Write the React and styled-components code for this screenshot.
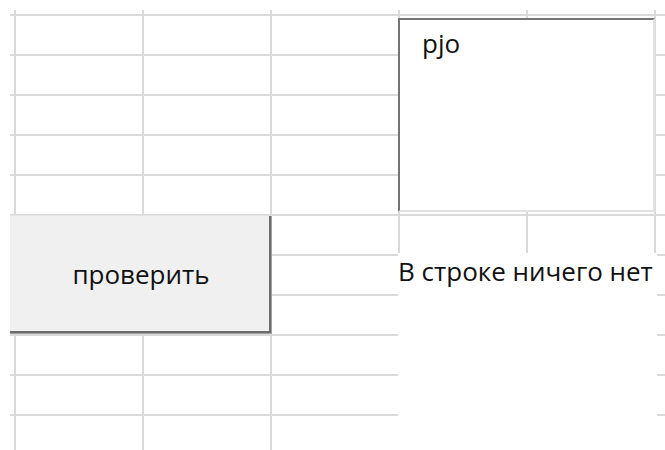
import React from "react";
import styled, { createGlobalStyle } from "styled-components";

const GlobalStyle = createGlobalStyle`
  html, body {
    margin: 0;
    padding: 0;
    background: #ffffff;
  }

  body {
    font-family: "Open Sans", "Noto Sans", "Liberation Sans", sans-serif;
    color: #111111;
    overflow: hidden;
  }
`;

const COLS = 6;
const ROWS = 11;

const Sheet = styled.div`
  position: relative;
  margin: 10px 0 0 10px;
  display: grid;
  grid-template-columns: 6px repeat(5, 128px) 1fr;
  grid-template-rows: 6px repeat(${ROWS}, 40px);
  height: 440px;
`;

const Cell = styled.div`
  box-sizing: border-box;
  border-bottom: 2px solid #dadada;
  border-right: ${({ $last }) => ($last ? "none" : "2px solid #dadada")};
`;

// floating controls sit on top of the grid
const TextBox = styled.div`
  position: absolute;
  left: 388px;
  top: 8px;
  width: 257px;
  height: 194px;
  box-sizing: border-box;
  background: #ffffff;
  border-top: 2px solid #747474;
  border-left: 2px solid #747474;
  border-right: 2px solid #e2e2e2;
  border-bottom: 2px solid #e2e2e2;
  padding: 5px 0 0 22px;
  font-size: 26px;
  line-height: 36px;
`;

const CheckButton = styled.button`
  position: absolute;
  left: 0;
  top: 205px;
  width: 262px;
  height: 119px;
  box-sizing: border-box;
  margin: 0;
  padding: 0 0 2px;
  background: #f0f0f0;
  border: none;
  border-top: 1px solid #e3e3e3;
  box-shadow: inset -1px -1px 0 #a0a0a0, inset -3px -3px 0 #6b6b6b;
  font-family: inherit;
  font-size: 26px;
  color: #111111;
  display: flex;
  align-items: center;
  justify-content: center;
`;

const ResultLabel = styled.div`
  position: absolute;
  left: 388px;
  top: 243px;
  width: 259px;
  bottom: 0;
  background: #ffffff;
  font-size: 26px;
  line-height: 36px;
  white-space: nowrap;
`;

export default function App() {
  const cells = [];
  for (let r = 0; r <= ROWS; r++) {
    for (let c = 0; c <= COLS; c++) {
      cells.push(<Cell key={`${r}-${c}`} $last={c === COLS} />);
    }
  }

  return (
    <>
      <GlobalStyle />
      <Sheet>
        {cells}
        <TextBox>pjo</TextBox>
        <CheckButton>проверить</CheckButton>
        <ResultLabel>В строке ничего нет</ResultLabel>
      </Sheet>
    </>
  );
}
